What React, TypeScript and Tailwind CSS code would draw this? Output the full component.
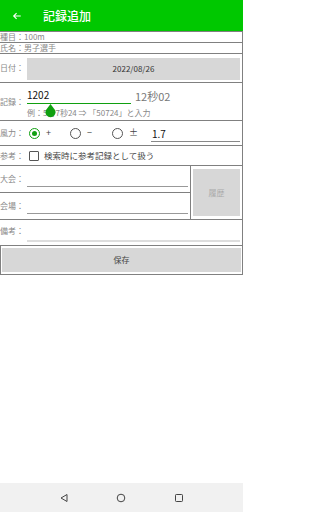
import React, { useState } from 'react';

const font = { fontFamily: '"Noto Sans CJK JP", "Noto Sans", sans-serif' };

const Radio = ({ checked, label }: { checked: boolean; label: string }) => (
	<div className="flex items-center gap-[6px]">
		<span
			className={`flex h-[11px] w-[11px] items-center justify-center rounded-full border-[1.5px] ${checked ? 'border-[#10a010]' : 'border-[#555]'}`}
		>
			{checked && <span className="h-[5px] w-[5px] rounded-full bg-[#10a010]" />}
		</span>
		<span className="text-[9px] text-[#444]">{label}</span>
	</div>
);

const App = () => {
	const [wind, setWind] = useState('1.7');

	return (
		<div className="flex h-[512px] w-[243px] flex-col overflow-hidden bg-white" style={font}>
			{/* header */}
			<div className="flex h-[31px] items-center bg-[#00c800] pl-[12px]">
				<svg width="10" height="10" viewBox="0 0 24 24" fill="none" stroke="white" strokeWidth="2.6">
					<path d="M21 12H4M11 5l-7 7 7 7" />
				</svg>
				<span className="ml-[21px] text-[12px] font-medium text-white">記録追加</span>
			</div>

			<div className="border-t border-[#808080]">
				<div className="flex h-[11px] items-center border-r border-b border-[#808080] text-[8px] leading-none text-[#888]">
					種目：100m
				</div>
				<div className="flex h-[11px] items-center border-r border-b border-[#808080] text-[8px] leading-none text-[#888]">
					氏名：男子選手
				</div>

				<div className="flex h-[29px] items-center border-r border-b border-[#808080] pr-[2px]">
					<span className="w-[27px] text-[8px] text-[#888]">日付：</span>
					<button className="mt-[2px] flex h-[22px] flex-1 items-center justify-center bg-[#d7d7d7] text-[8px] text-[#333]">
						2022/08/26
					</button>
				</div>

				{/* record */}
				<div className="flex h-[38px] border-r border-b border-[#808080]">
					<span className="w-[27px] pt-[13px] text-[8px] text-[#888]">記録：</span>
					<div className="relative flex min-w-0 flex-1 flex-col pt-[6px]">
						<div className="flex items-end">
							<div className="w-[104px] border-b-[1.5px] border-[#10a010] pb-[2px] text-[10px] leading-[12px] text-[#111]">
								1202
							</div>
							<span className="ml-[4px] pb-[1px] text-[11px] leading-[14px] text-[#777]">12秒02</span>
						</div>
						<div className="mt-[4px] text-[8px] leading-[10px] text-[#888]">例：5分7秒24 ⇒ 「50724」と入力</div>
						<svg className="absolute left-[18px] top-[21px]" width="11" height="14" viewBox="0 0 11 14">
							<path d="M5.5 0 L10 6 A5 5 0 1 1 1 6 Z" fill="#10a010" />
						</svg>
					</div>
				</div>

				{/* wind */}
				<div className="flex h-[25px] items-center border-r border-b border-[#808080] pr-[2px]">
					<span className="w-[29px] text-[8px] text-[#888]">風力：</span>
					<div className="flex w-[122px] items-center">
						<div className="w-[41px]">
							<Radio checked label="+" />
						</div>
						<div className="w-[42px]">
							<Radio checked={false} label="−" />
						</div>
						<Radio checked={false} label="±" />
					</div>
					<div className="min-w-0 flex-1 self-end pb-[2px]">
						<input
							value={wind}
							size={1}
							onChange={(e) => setWind(e.target.value)}
							className="w-full min-w-0 border-b border-[#888] pl-[1px] text-[10px] leading-[14px] text-[#111] outline-none"
						/>
					</div>
				</div>

				{/* reference */}
				<div className="flex h-[20px] items-center border-r border-b border-[#808080]">
					<span className="w-[29px] text-[8px] text-[#888]">参考：</span>
					<span className="h-[10px] w-[10px] rounded-[1px] border-[1.5px] border-[#555]" />
					<span className="ml-[5px] text-[8.5px] text-[#444]">検索時に参考記録として扱う</span>
				</div>

				{/* meet / venue */}
				<div className="flex h-[54px] border-b border-[#808080]">
					<div className="flex w-[191px] flex-col border-r border-[#808080]">
						<div className="flex h-[27px] items-end border-b border-[#808080] pb-[5px]">
							<span className="w-[27px] pb-[2px] text-[8px] text-[#888]">大会：</span>
							<div className="mr-[2px] h-[1px] flex-1 bg-[#999]" />
						</div>
						<div className="flex h-[26px] items-end pb-[5px]">
							<span className="w-[27px] pb-[2px] text-[8px] text-[#888]">会場：</span>
							<div className="mr-[2px] h-[1px] flex-1 bg-[#999]" />
						</div>
					</div>
					<div className="flex flex-1 items-center justify-center border-r border-[#808080] px-[2px] py-[3px]">
						<button className="flex h-full w-full items-center justify-center bg-[#d7d7d7] text-[8px] text-[#aaa]">
							履歴
						</button>
					</div>
				</div>

				{/* note */}
				<div className="flex h-[26px] items-end border-r border-b border-[#808080] pr-[2px] pb-[3px]">
					<span className="w-[27px] pb-[5px] text-[8px] text-[#888]">備考：</span>
					<div className="h-[2px] flex-1 bg-[#ddd]" />
				</div>

				{/* save */}
				<div className="flex h-[29px] border-x border-b border-[#808080] px-[1px] py-[2px]">
					<button className="flex flex-1 items-center justify-center bg-[#d7d7d7] text-[8px] text-[#444]">
						保存
					</button>
				</div>
			</div>

			<div className="flex-1" />

			{/* nav bar */}
			<div className="flex h-[29px] items-center justify-around bg-[#f1f1f1] px-[35px]">
				<svg width="10" height="10" viewBox="0 0 10 10" fill="none" stroke="#444" strokeWidth="1">
					<path d="M8 1.5 L2 5 L8 8.5 Z" />
				</svg>
				<svg width="10" height="10" viewBox="0 0 10 10" fill="none" stroke="#444" strokeWidth="1">
					<circle cx="5" cy="5" r="3.8" />
				</svg>
				<svg width="10" height="10" viewBox="0 0 10 10" fill="none" stroke="#444" strokeWidth="1">
					<rect x="1.5" y="1.5" width="7" height="7" rx="0.8" />
				</svg>
			</div>
		</div>
	);
};

export default App;
